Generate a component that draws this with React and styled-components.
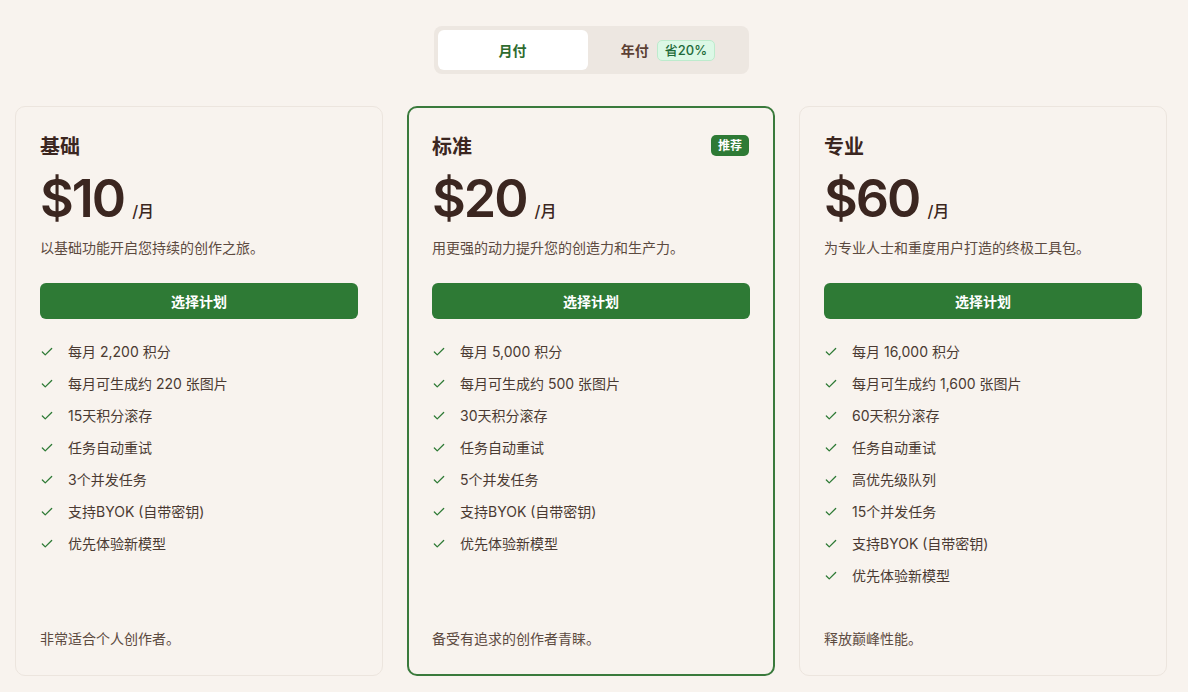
import React, { useState } from "react";
import styled, { createGlobalStyle } from "styled-components";

const GlobalStyle = createGlobalStyle`
  body {
    margin: 0;
    background: #f8f3ee;
    font-family: Inter, "Noto Sans CJK SC", sans-serif;
    color: #3b2620;
  }
`;

const plans = [
  {
    name: "基础",
    price: "$10",
    desc: "以基础功能开启您持续的创作之旅。",
    features: ["每月 2,200 积分", "每月可生成约 220 张图片", "15天积分滚存", "任务自动重试", "3个并发任务", "支持BYOK (自带密钥)", "优先体验新模型"],
    footer: "非常适合个人创作者。",
  },
  {
    name: "标准",
    price: "$20",
    desc: "用更强的动力提升您的创造力和生产力。",
    features: ["每月 5,000 积分", "每月可生成约 500 张图片", "30天积分滚存", "任务自动重试", "5个并发任务", "支持BYOK (自带密钥)", "优先体验新模型"],
    footer: "备受有追求的创作者青睐。",
    featured: true,
  },
  {
    name: "专业",
    price: "$60",
    desc: "为专业人士和重度用户打造的终极工具包。",
    features: ["每月 16,000 积分", "每月可生成约 1,600 张图片", "60天积分滚存", "任务自动重试", "高优先级队列", "15个并发任务", "支持BYOK (自带密钥)", "优先体验新模型"],
    footer: "释放巅峰性能。",
  },
];

function Check() {
  return (
    <svg width="14" height="14" viewBox="0 0 24 24" fill="none" stroke="#2e7a35" strokeWidth="2.2" strokeLinecap="round" strokeLinejoin="round">
      <path d="M20 6 9 17l-5-5" />
    </svg>
  );
}

export default function App() {
  const [yearly, setYearly] = useState(false);
  return (
    <>
      <GlobalStyle />
      <Page>
        <Toggle>
          <ToggleButton $w={150} $active={!yearly} onClick={() => setYearly(false)}>月付</ToggleButton>
          <ToggleButton $w={153} $active={yearly} onClick={() => setYearly(true)}>
            年付 <Save>省20%</Save>
          </ToggleButton>
        </Toggle>
        <Grid>
          {plans.map((p) => (
            <Card key={p.name} $featured={p.featured}>
              <TitleRow>
                <Title>{p.name}</Title>
                {p.featured && <Badge>推荐</Badge>}
              </TitleRow>
              <PriceRow>
                <Price>{p.price}</Price>
                <Per>/月</Per>
              </PriceRow>
              <Desc>{p.desc}</Desc>
              <SelectButton>选择计划</SelectButton>
              <Features>
                {p.features.map((f) => (
                  <Feature key={f}>
                    <Check />
                    <span>{f}</span>
                  </Feature>
                ))}
              </Features>
              <Footer>{p.footer}</Footer>
            </Card>
          ))}
        </Grid>
      </Page>
    </>
  );
}

const Page = styled.div`
  padding: 26px 21px 16px 15px;
  display: flex;
  flex-direction: column;
  align-items: center;
`;

const Toggle = styled.div`
  display: flex;
  gap: 4px;
  padding: 4px;
  background: #ede7e1;
  border-radius: 8px;
`;

const ToggleButton = styled.button`
  width: ${(p) => p.$w}px;
  height: 40px;
  border: none;
  border-radius: 6px;
  display: flex;
  align-items: center;
  justify-content: center;
  gap: 8px;
  font-family: inherit;
  font-size: 14px;
  font-weight: 700;
  cursor: pointer;
  background: ${(p) => (p.$active ? "#ffffff" : "transparent")};
  color: ${(p) => (p.$active ? "#2e6b2f" : "#5c4034")};
`;

const Save = styled.span`
  font-size: 13px;
  font-weight: 500;
  line-height: 17px;
  color: #1f6b3a;
  background: #dcf8e6;
  border: 1px solid #bdebcd;
  border-radius: 5px;
  padding: 1px 7px;
`;

const Grid = styled.div`
  margin-top: 32px;
  align-self: stretch;
  display: grid;
  grid-template-columns: repeat(3, 368px);
  gap: 24px;
`;

const Card = styled.div`
  height: 570px;
  box-sizing: border-box;
  display: flex;
  flex-direction: column;
  padding: ${(p) => (p.$featured ? "23px" : "24px")};
  border: ${(p) => (p.$featured ? "2px solid #3a7a3c" : "1px solid #ece5de")};
  border-radius: 10px;
  background: #f8f3ee;
`;

const TitleRow = styled.div`
  display: flex;
  align-items: center;
  justify-content: space-between;
  height: 28px;
`;

const Title = styled.h2`
  margin: 0;
  font-size: 20px;
  font-weight: 700;
  color: #3b2620;
`;

const Badge = styled.span`
  background: #2e7a35;
  color: #ffffff;
  font-size: 12px;
  font-weight: 700;
  padding: 2px 7px;
  border-radius: 5px;
  line-height: 17px;
  margin-right: 1px;
`;

const PriceRow = styled.div`
  display: flex;
  align-items: baseline;
  gap: 8px;
  margin-top: 8px;
`;

const Price = styled.span`
  font-size: 52px;
  font-weight: 600;
  line-height: 64px;
  color: #3b2620;
  letter-spacing: -2px;
`;

const Per = styled.span`
  font-size: 16px;
  font-weight: 500;
  color: #3b2620;
`;

const Desc = styled.p`
  margin: 7px 0 0;
  font-size: 14px;
  line-height: 20px;
  color: #5c4a40;
`;

const SelectButton = styled.button`
  margin-top: 25px;
  height: 36px;
  border: none;
  border-radius: 6px;
  background: #2e7a35;
  color: #ffffff;
  font-family: inherit;
  font-size: 14px;
  font-weight: 700;
  cursor: pointer;
`;

const Features = styled.ul`
  list-style: none;
  margin: 23px 0 0;
  padding: 0;
  flex: 1;
  display: flex;
  flex-direction: column;
  gap: 12px;
`;

const Feature = styled.li`
  display: flex;
  align-items: center;
  gap: 14px;
  font-size: 14px;
  line-height: 20px;
  color: #4a3a32;
`;

const Footer = styled.p`
  margin: 0 0 2px;
  font-size: 14px;
  line-height: 20px;
  color: #5c4a40;
`;
